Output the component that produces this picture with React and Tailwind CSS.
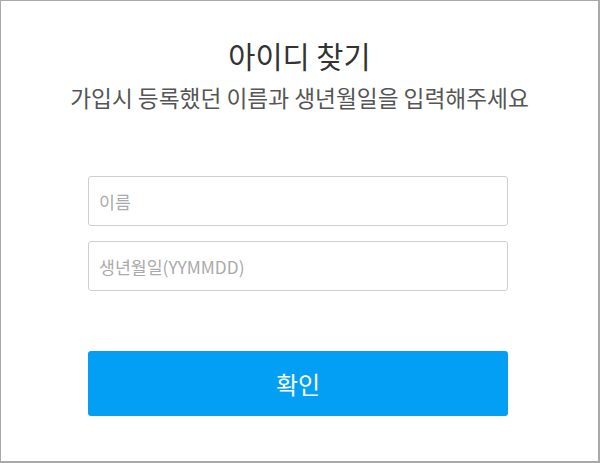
export default function App() {
  return (
    <div
      className="w-[600px] h-[463px] border-l border-t border-r-2 border-b-2 border-[#a9a9a9] bg-white flex flex-col items-center"
      style={{ fontFamily: '"Noto Sans CJK KR", "Noto Sans", sans-serif' }}
    >
      <h1 className="mt-[34px] text-[29.5px] leading-[40px] text-[#333] font-normal">아이디 찾기</h1>
      <p className="mt-[8px] text-[22.7px] leading-[30px] text-[#555]">가입시 등록했던 이름과 생년월일을 입력해주세요</p>

      <div className="mt-[63px] mr-[3px] w-[420px] flex flex-col gap-[15px]">
        <input
          type="text"
          placeholder="이름"
          className="h-[50px] w-full rounded-[3px] border border-[#cfcfcf] px-[10px] text-[17.3px] text-[#333] placeholder:text-[#aaa] outline-none"
        />
        <input
          type="text"
          placeholder="생년월일(YYMMDD)"
          className="h-[50px] w-full rounded-[3px] border border-[#cfcfcf] px-[10px] text-[17.3px] text-[#333] placeholder:text-[#aaa] outline-none"
        />
      </div>

      <button className="mt-[60px] mr-[3px] w-[420px] h-[65px] rounded-[3px] bg-[#039ff4] text-white text-[24px]">
        확인
      </button>
    </div>
  );
}
